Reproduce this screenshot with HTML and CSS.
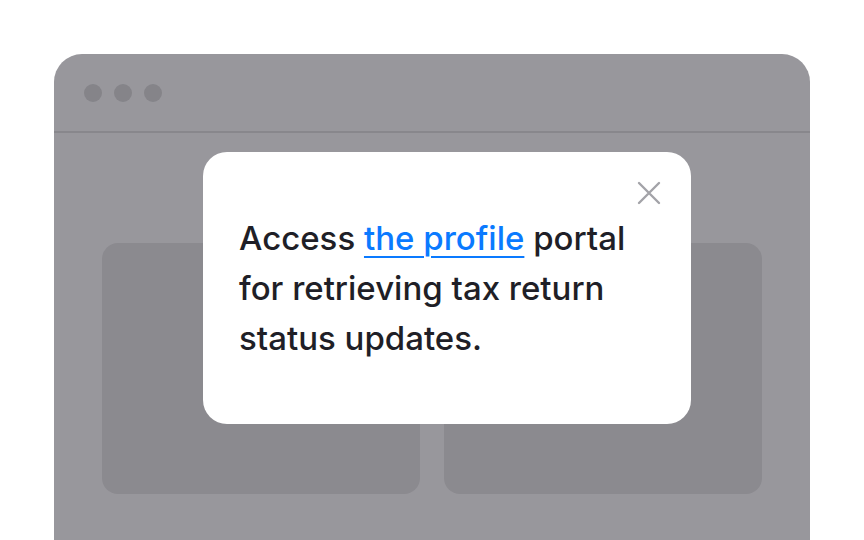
FILE: index.html
```html
<!DOCTYPE html>
<html lang="en">
<head>
    <meta charset="UTF-8">
    <meta name="viewport" content="width=device-width, initial-scale=1.0">
    <title>Popover Demo</title>
    <link rel="stylesheet" href="styles.css">
</head>
<body>
    <div class="window">
        <div class="window-bar">
            <span class="dot"></span>
            <span class="dot"></span>
            <span class="dot"></span>
        </div>
        <div class="window-body">
            <div class="panel"></div>
            <div class="panel"></div>
        </div>

        <div class="popover">
            <button class="close-btn" aria-label="Close">
                <svg width="24" height="24" viewBox="0 0 24 24">
                    <path d="M2 2 L22 22 M22 2 L2 22" stroke="#a3a3a8" stroke-width="2.4" stroke-linecap="round" fill="none"/>
                </svg>
            </button>
            <p class="popover-text">Access <a href="#">the profile</a> portal for retrieving tax return status updates.</p>
        </div>
    </div>
</body>
</html>
```

FILE: styles.css
```css
html, body {
    margin: 0;
    padding: 0;
}
body {
    background-color: white;
    font-family: Inter, "Noto Sans", sans-serif;
    width: 864px;
    height: 540px;
    overflow: hidden;
}
.window {
    position: relative;
    margin: 54px 0 0 54px;
    width: 756px;
    height: 486px;
    background-color: #98979c;
    border-radius: 28px 28px 0 0;
}
.window-bar {
    display: flex;
    align-items: center;
    gap: 12px;
    height: 77px;
    padding: 0 0 0 30px;
    border-bottom: 2px solid #88878c;
}
.dot {
    width: 18px;
    height: 18px;
    border-radius: 50%;
    background-color: #858489;
}
.window-body {
    display: flex;
    gap: 24px;
    padding: 110px 48px 0;
}
.panel {
    flex: 1;
    height: 251px;
    border-radius: 16px;
    background-color: #8b8a8f;
}
.popover {
    position: absolute;
    left: 149px;
    top: 98px;
    width: 488px;
    height: 272px;
    box-sizing: border-box;
    padding: 61px 36px 0;
    background-color: white;
    border-radius: 24px;
}
.close-btn {
    position: absolute;
    top: 29px;
    right: 30px;
    padding: 0;
    border: none;
    background: none;
    cursor: pointer;
    line-height: 0;
}
.popover-text {
    margin: 0;
    max-width: 400px;
    font-size: 33px;
    font-weight: 500;
    line-height: 50px;
    color: #1f1f27;
}
.popover-text a {
    color: #0a7aff;
    text-decoration: underline;
    text-decoration-thickness: 2px;
    text-underline-offset: 6px;
}
```
